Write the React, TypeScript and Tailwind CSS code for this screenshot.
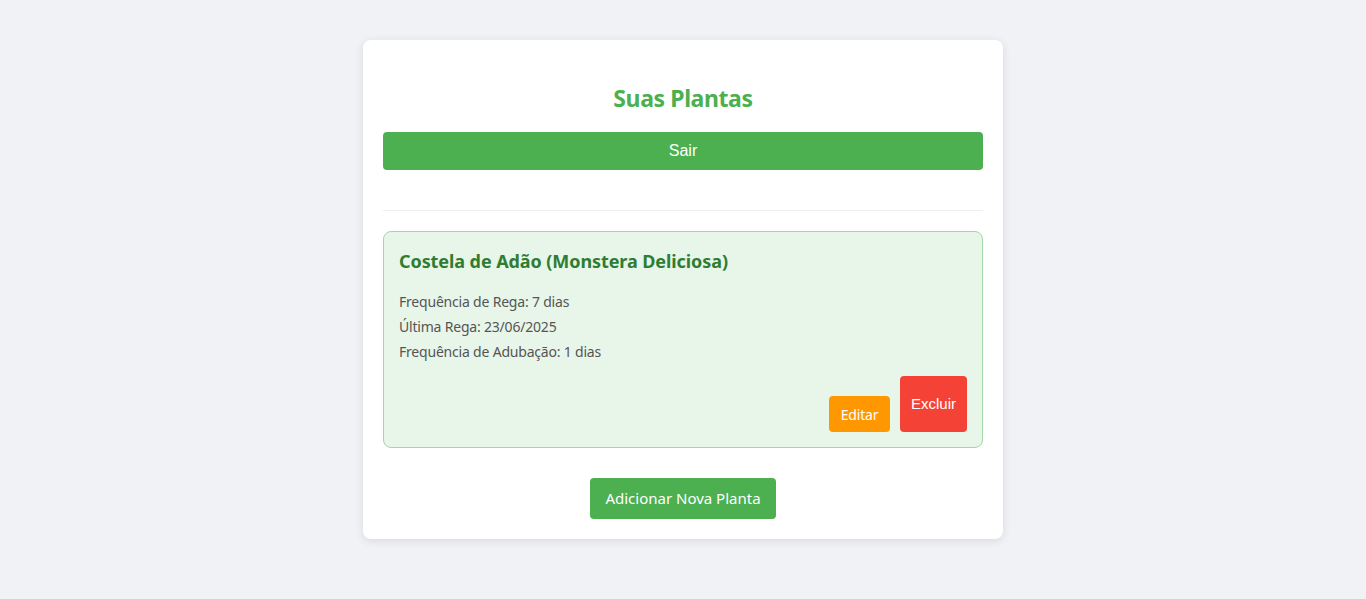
import React from "react";

export default function App() {
  const seg = { fontFamily: '"Noto Sans", "Open Sans", sans-serif' };
  return (
    <div className="min-h-[599px] w-full bg-[#f0f2f5] pt-[40px]" style={seg}>
      <div className="mx-auto w-[640px] rounded-[8px] bg-white px-[20px] pb-[20px] pt-[20px] shadow-[0_2px_10px_rgba(0,0,0,0.1)]">
        <h2 className="mt-[22px] mb-[18px] h-[32px] text-center text-[23px] font-bold leading-[32px] tracking-[-0.4px] text-[#4caf50]">
          Suas Plantas
        </h2>
        <button
          className="block h-[38px] w-full rounded-[4px] bg-[#4caf50] text-[16px] text-white"
          style={{ fontFamily: '"Liberation Sans", Arial, sans-serif' }}
        >
          Sair
        </button>
        <div className="mt-[40px] h-px w-full bg-[#eeeeee]" />
        <div className="mt-[20px] rounded-[8px] border border-[#a5d6a7] bg-[#e8f5e9] px-[15px] pt-[17px] pb-[15px]">
          <h3 className="h-[24px] text-[18px] font-bold leading-[24px] tracking-[-0.08px] text-[#2e7d32]">
            Costela de Adão (Monstera Deliciosa)
          </h3>
          <div className="mt-[16px] text-[14px] leading-[25px] tracking-[-0.2px] text-[#555555]">
            <p>Frequência de Rega: 7 dias</p>
            <p>Última Rega: 23/06/2025</p>
            <p>Frequência de Adubação: 1 dias</p>
          </div>
          <div className="mt-[12px] flex items-end justify-end gap-[10px]">
            <button className="h-[36px] w-[61px] rounded-[4px] bg-[#ff9800] text-[14px] tracking-[-0.2px] text-white">
              Editar
            </button>
            <button
              className="h-[56px] w-[67px] rounded-[4px] bg-[#f44336] text-[15px] text-white"
              style={{ fontFamily: '"Liberation Sans", Arial, sans-serif' }}
            >
              Excluir
            </button>
          </div>
        </div>
        <div className="mt-[30px] flex justify-center">
          <button className="h-[41px] w-[186px] rounded-[4px] bg-[#4caf50] text-[15px] text-white">
            Adicionar Nova Planta
          </button>
        </div>
      </div>
    </div>
  );
}
